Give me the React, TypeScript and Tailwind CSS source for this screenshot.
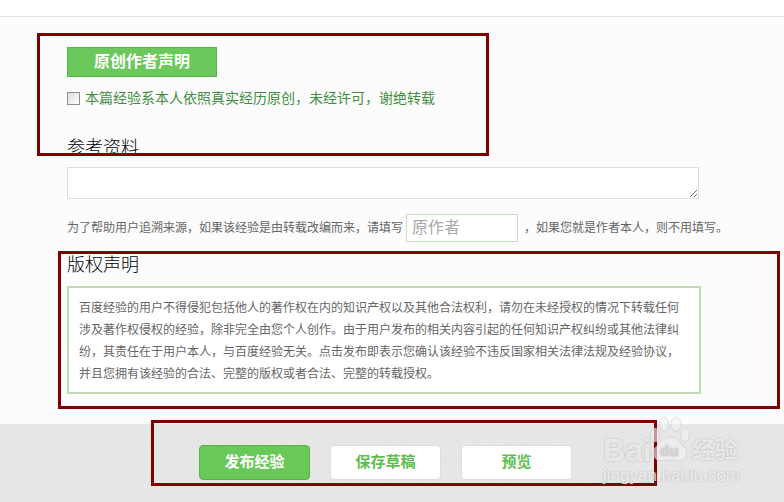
const font = { fontFamily: '"Liberation Sans", "Noto Sans CJK SC", sans-serif' };

function Frame({ className }: { className: string }) {
  return <div className={`absolute border-[3px] border-[#7f0000] pointer-events-none ${className}`} />;
}

function Watermark() {
  return (
    <div className="absolute left-[600px] top-[410px] w-[184px] h-[85px] text-white/70 select-none pointer-events-none [text-shadow:0_0_2px_rgba(150,150,150,0.7)]">
      <svg className="absolute left-[49px] top-[6px]" width="42" height="48" viewBox="0 0 42 48" fill="#f2f2f2" fillOpacity="0.62" stroke="#b4b4b4" strokeOpacity="0.35">
        <ellipse cx="6" cy="19" rx="4.5" ry="7" />
        <ellipse cx="15" cy="8" rx="4.5" ry="7" />
        <ellipse cx="27" cy="8" rx="5" ry="7" />
        <ellipse cx="36" cy="19" rx="4.5" ry="7" />
        <path d="M21 21c-6 0-8 5-13 9-6 4-5 15 5 15 3 0 5-1 8-1s5 1 8 1c10 0 11-11 5-15-5-4-7-9-13-9z" />
      </svg>
      <div className="absolute left-[3px] top-[24px] text-[31px] leading-[34px] font-bold">Bai</div>
      <div className="absolute left-[60px] top-[32px] text-[15px] leading-[18px] font-bold text-[#d4d4d4]">du</div>
      <div className="absolute left-[92px] top-[25px] text-[23px] leading-[30px] font-bold whitespace-nowrap">经验</div>
      <div className="absolute left-[3px] top-[56px] text-[17px] leading-[20px] whitespace-nowrap">jingyan.baidu.com</div>
    </div>
  );
}

export default function App() {
  return (
    <div style={font} className="relative w-[784px] h-[502px] overflow-hidden flex flex-col bg-white">
      <div className="h-[17px] shrink-0 bg-white border-b border-[#e0e0e0]" />
      <main className="flex-1 bg-[#fcfcfc] pl-[67px] pt-[30px] flex flex-col items-start">
        <div className="w-[150px] h-[30px] bg-[#6bc95c] border border-[#59b34b] flex items-center justify-center text-white text-[16px] font-bold">
          原创作者声明
        </div>
        <label className="flex items-center mt-[13px] h-[16px] text-[14px] leading-[16px] text-[#3f8f3f]">
          <span className="block w-[13px] h-[13px] border border-[#8f8f8f] bg-gradient-to-br from-[#dcdcdc] to-white mr-[5px]" />
          本篇经验系本人依照真实经历原创，未经许可，谢绝转载
        </label>
        <h2 className="mt-[30px] text-[18px] leading-[24px] font-light text-black">参考资料</h2>
        <textarea className="mt-[7px] block w-[632px] h-[32px] bg-white border border-[#dfdfdf] outline-none" />
        <div className="mt-[15px] flex items-center h-[28px] text-[12px] text-[#666666] whitespace-nowrap">
          为了帮助用户追溯来源，如果该经验是由转载改编而来，请填写
          <input
            placeholder="原作者"
            className="ml-[3px] w-[112px] h-[28px] bg-white border border-[#c6dfbd] px-[5px] text-[16px] outline-none placeholder:text-[#a9a9a9]"
          />
          <span className="ml-[6px]">，如果您就是作者本人，则不用填写。</span>
        </div>
        <h2 className="mt-[11px] text-[18px] leading-[24px] font-light text-black">版权声明</h2>
        <div className="mt-[9px] w-[634px] h-[108px] bg-white border-2 border-[#c0dcb4] pl-[10px] pr-[14px] pt-[9px] text-[12px] leading-[22px] text-[#666666]">
          百度经验的用户不得侵犯包括他人的著作权在内的知识产权以及其他合法权利，请勿在未经授权的情况下转载任何涉及著作权侵权的经验，除非完全由您个人创作。由于用户发布的相关内容引起的任何知识产权纠纷或其他法律纠纷，其责任在于用户本人，与百度经验无关。点击发布即表示您确认该经验不违反国家相关法律法规及经验协议，并且您拥有该经验的合法、完整的版权或者合法、完整的转载授权。
        </div>
      </main>
      <footer className="h-[78px] shrink-0 bg-[#e6e6e6] bg-[repeating-linear-gradient(135deg,#e9e9e9_0px,#e9e9e9_1px,#e3e3e3_2px,#e3e3e3_3px)] pl-[199px] pt-[21px] flex items-start gap-[20px]">
        <button className="w-[111px] h-[35px] rounded-[4px] bg-[#68c958] border border-[#59b34b] text-white text-[15px] font-bold">发布经验</button>
        <button className="w-[111px] h-[35px] rounded-[4px] bg-white border border-[#dddddd] text-[#5cbf4c] text-[15px] font-bold">保存草稿</button>
        <button className="w-[111px] h-[35px] rounded-[4px] bg-white border border-[#dddddd] text-[#5cbf4c] text-[15px] font-bold">预览</button>
      </footer>
      <Frame className="left-[37px] top-[33px] w-[452px] h-[123px]" />
      <Frame className="left-[58px] top-[251px] w-[722px] h-[158px]" />
      <Frame className="left-[151px] top-[420px] w-[506px] h-[66px]" />
      <Watermark />
    </div>
  );
}
